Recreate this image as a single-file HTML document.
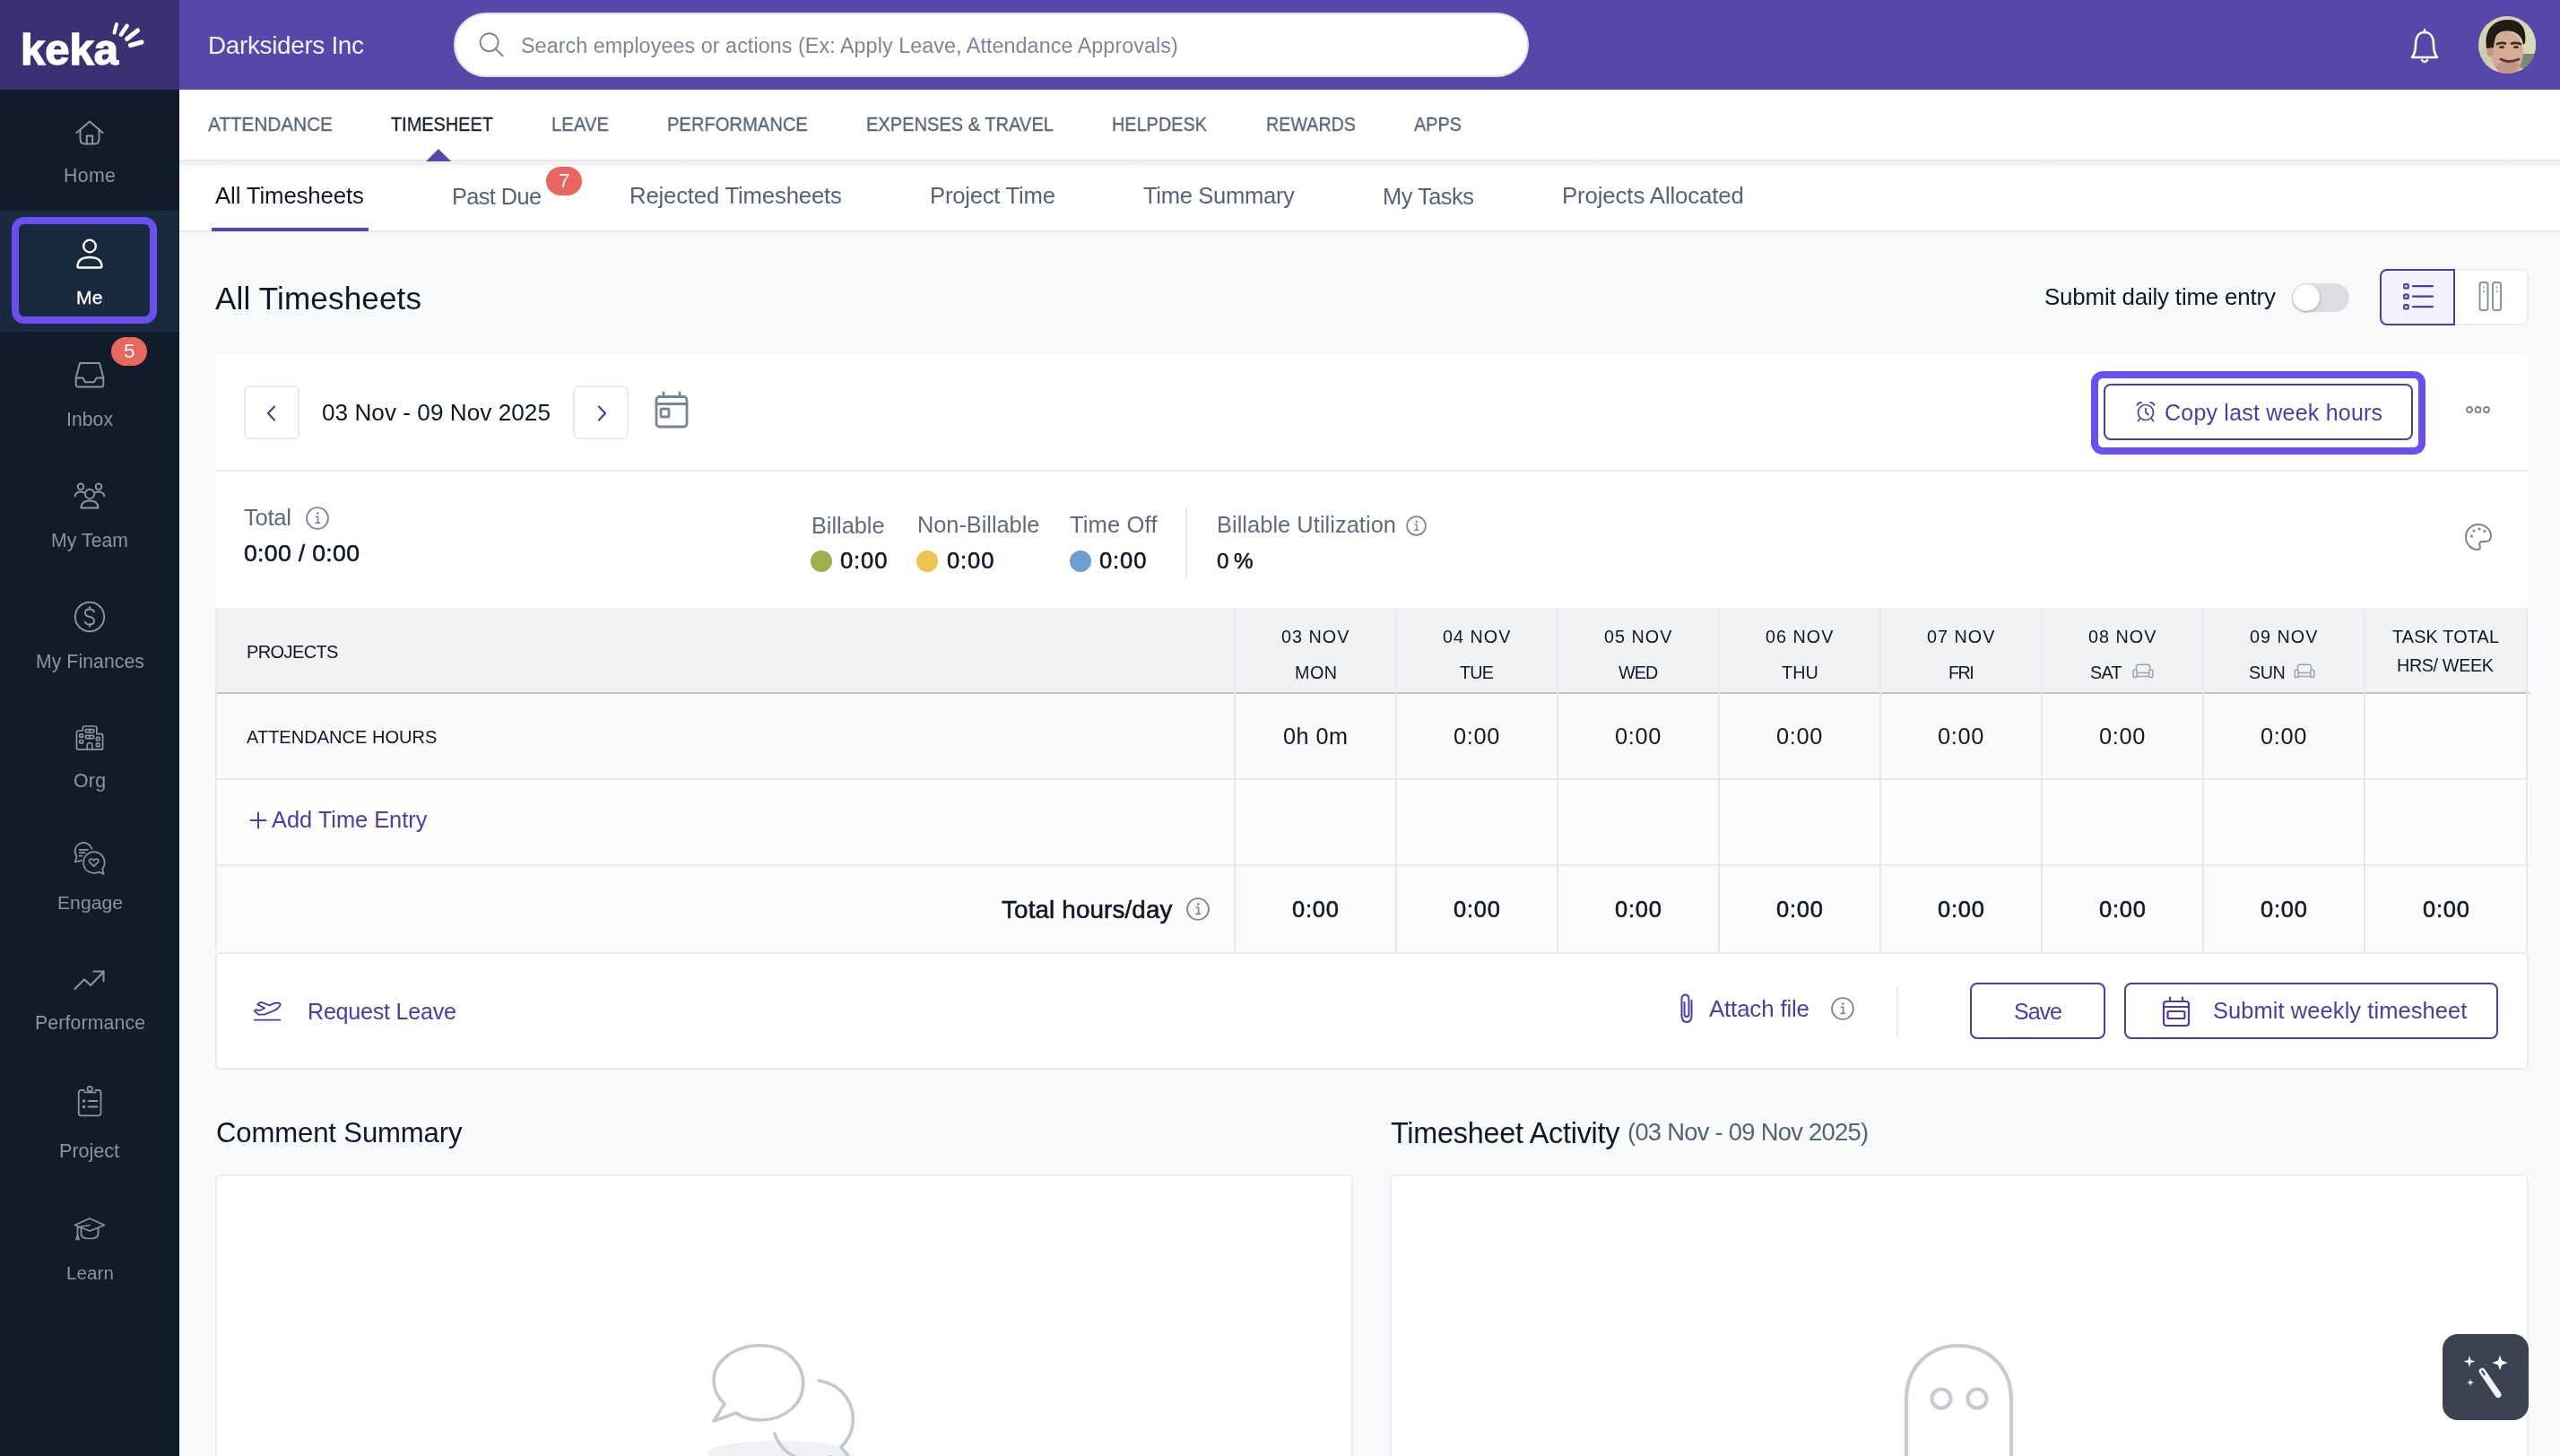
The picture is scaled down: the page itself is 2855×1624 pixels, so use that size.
<!DOCTYPE html>
<html><head><meta charset="utf-8"><style>
html,body{margin:0;padding:0;}
body{width:2855px;height:1624px;position:relative;overflow:hidden;background:#f8f9fb;font-family:"Liberation Sans",sans-serif;}
.t{position:absolute;white-space:nowrap;will-change:transform;}
svg{display:block}
</style></head><body>
<div style="position:absolute;left:0px;top:0px;width:200px;height:1624px;background:#101c29"></div>
<div style="position:absolute;left:0px;top:0px;width:200px;height:100px;background:#3c3073"></div>
<div style="position:absolute;left:200px;top:0px;width:2655px;height:100px;background:#5647a8"></div>
<div style="position:absolute;left:200px;top:100px;width:2655px;height:78px;background:#fff"></div>
<div style="position:absolute;left:200px;top:178px;width:2655px;height:79px;background:#fff"></div>
<div style="position:absolute;left:200px;top:178px;width:2655px;height:13px;background:linear-gradient(#e6e7ea 0%,#efeff1 25%,#f8f8f9 55%,#fdfdfd 80%,rgba(255,255,255,0) 100%)"></div>
<div style="position:absolute;left:200px;top:257px;width:2655px;height:2px;background:#e8eaed"></div>
<div class="t" style="left:22.5px;top:31px;font-size:49px;line-height:49px;color:#fff;font-weight:700;letter-spacing:0px;-webkit-text-stroke:1.4px #fff">keka</div>
<svg style="position:absolute;left:120px;top:20px;overflow:visible" width="45" height="40" viewBox="0 0 45 40"><g stroke="#fff" stroke-linecap="round" fill="none"><line x1="7.5" y1="16.5" x2="10" y2="7" stroke-width="4"/><line x1="15" y1="18.5" x2="21.5" y2="9" stroke-width="4.6"/><line x1="21.5" y1="23.5" x2="33.5" y2="14" stroke-width="5"/><line x1="25.5" y1="30.5" x2="38" y2="27" stroke-width="5"/></g></svg>
<div class="t" style="left:232.00px;top:36.87px;font-size:27.9px;line-height:27.9px;color:#f2f0fb;font-weight:400;letter-spacing:-0.33px;">Darksiders Inc</div>
<div style="position:absolute;left:506px;top:14px;width:1199px;height:72px;border-radius:36px;background:#fff;box-sizing:border-box;border:2px solid #dfe1e6"></div>
<svg style="position:absolute;left:533px;top:35px;overflow:visible" width="32" height="32" viewBox="0 0 32 32"><circle cx="12.6" cy="12.2" r="10" stroke="#7b8797" stroke-width="1.9" fill="none"/><line x1="19.8" y1="19.6" x2="27.5" y2="27.3" stroke="#7b8797" stroke-width="2" stroke-linecap="round"/></svg>
<div class="t" style="left:581.00px;top:40.23px;font-size:23.34px;line-height:23.34px;color:#7b8797;font-weight:400;letter-spacing:0.06px;">Search employees or actions (Ex: Apply Leave, Attendance Approvals)</div>
<svg style="position:absolute;left:2686px;top:30px;overflow:visible" width="36" height="44" viewBox="0 0 36 44"><path d="M4 34 C7 30 8 27 8 20 C8 11 12 6 18 6 C24 6 28 11 28 20 C28 27 29 30 32 34 Z" stroke="#fff" stroke-width="2.6" fill="none" stroke-linejoin="round"/><path d="M15 37 Q18 41 21 37" stroke="#fff" stroke-width="2.4" fill="none" stroke-linecap="round"/><line x1="18" y1="3" x2="18" y2="6" stroke="#fff" stroke-width="2.4" stroke-linecap="round"/></svg>
<svg style="position:absolute;left:2764px;top:18px;overflow:visible" width="64" height="64" viewBox="0 0 64 64"><defs><clipPath id="av"><circle cx="32" cy="32" r="32"/></clipPath></defs><g clip-path="url(#av)"><rect width="64" height="64" fill="#d6d2b4"/><rect x="0" y="34" width="14" height="30" fill="#c8cfac"/><rect x="47" y="42" width="17" height="22" fill="#6f8f70"/><rect x="47" y="14" width="17" height="28" fill="#d9d8b8"/><ellipse cx="32" cy="41" rx="18" ry="24" fill="#d5ab96"/><ellipse cx="13" cy="39" rx="4" ry="6.5" fill="#c59883"/><path d="M9 36 C6 16 16 4 33 4 C48 4 54 14 52 30 L50 32 C49 22 42 16 31 16.5 C21 17 18 22 17 35 Z" fill="#231a15"/><path d="M20 31.5 Q26 28.5 31 31" stroke="#3b2a22" stroke-width="2.6" fill="none"/><path d="M36 31 Q42 28.5 48 31.5" stroke="#3b2a22" stroke-width="2.6" fill="none"/><ellipse cx="26" cy="34.5" rx="3" ry="1.6" fill="#4a3129"/><ellipse cx="42" cy="34.5" rx="3" ry="1.6" fill="#4a3129"/><ellipse cx="34" cy="57" rx="14" ry="7" fill="#b48874" opacity="0.55"/><path d="M25 48 Q34 53 45 48" stroke="#5b3b31" stroke-width="3" fill="none" stroke-linecap="round"/><path d="M44 64 L46 59 L50 58 L50 64 Z" fill="#e4e2da"/></g></svg>
<div style="position:absolute;left:0px;top:235px;width:200px;height:135px;background:#192a3f"></div>
<div style="position:absolute;left:13px;top:242px;width:162px;height:119px;box-sizing:border-box;border:8px solid #6c4ff2;border-radius:14px"></div>
<svg style="position:absolute;left:84px;top:133px;overflow:visible" width="32" height="30" viewBox="0 0 32 30"><g stroke="#8a94a3" stroke-width="2" fill="none" stroke-linecap="round" stroke-linejoin="round"><path d="M1.5 15 L16 2.5 L30.5 15"/><path d="M5.5 11.5 V22 Q5.5 27.5 11 27.5 H21 Q26.5 27.5 26.5 22 V11.5"/><path d="M12.7 27.5 V18.5 H19.2 V27.5"/></g></svg>
<div class="t" style="left:71.00px;top:185.93px;font-size:21.34px;line-height:21.34px;color:#8a94a3;font-weight:400;letter-spacing:0.36px;">Home</div>
<svg style="position:absolute;left:84px;top:262px;overflow:visible" width="32" height="40" viewBox="0 0 32 40"><g stroke="#fff" stroke-width="2.3" fill="none" stroke-linecap="round" stroke-linejoin="round"><circle cx="16" cy="12.5" r="6.8"/><path d="M2.5 35.5 Q2.5 25 16 25 Q29.5 25 29.5 35.5 Q29.5 36.5 28 36.5 H4 Q2.5 36.5 2.5 35.5 Z"/></g></svg>
<div class="t" style="left:85.25px;top:320.59px;font-size:21.14px;line-height:21.14px;color:#ffffff;font-weight:400;letter-spacing:0.13px;-webkit-text-stroke:0.3px #fff;">Me</div>
<svg style="position:absolute;left:83px;top:402px;overflow:visible" width="34" height="32" viewBox="0 0 34 32"><g stroke="#8a94a3" stroke-width="1.9" fill="none" stroke-linecap="round" stroke-linejoin="round"><path d="M6 3 H28 L32.3 19.5 V27 Q32.3 29.5 29.8 29.5 H4.2 Q1.7 29.5 1.7 27 V19.5 Z"/><path d="M1.7 19.5 H9.4 L12 24.2 H22 L24.6 19.5 H32.3"/></g></svg>
<div style="position:absolute;left:124px;top:376px;width:40px;height:32px;border-radius:16px;background:#e8675f"></div>
<div class="t" style="left:137.73px;top:380.92px;font-size:22.53px;line-height:22.53px;color:#fff;font-weight:400;letter-spacing:0px;">5</div>
<div class="t" style="left:73.99px;top:457.09px;font-size:21.15px;line-height:21.15px;color:#8a94a3;font-weight:400;letter-spacing:0.07px;">Inbox</div>
<svg style="position:absolute;left:82px;top:538px;overflow:visible" width="36" height="30" viewBox="0 0 36 30"><g stroke="#8a94a3" stroke-width="1.9" fill="none" stroke-linecap="round" stroke-linejoin="round"><circle cx="18" cy="13" r="5.2"/><path d="M8.5 28.5 Q8.5 20.5 18 20.5 Q27.5 20.5 27.5 28.5 Z"/><circle cx="8" cy="4.8" r="3.3"/><circle cx="28" cy="4.8" r="3.3"/><path d="M1.5 15.5 Q2.5 10.5 8 10.5 Q10.5 10.5 12 11.5"/><path d="M34.5 15.5 Q33.5 10.5 28 10.5 Q25.5 10.5 24 11.5"/></g></svg>
<div class="t" style="left:57.01px;top:592.08px;font-size:21.16px;line-height:21.16px;color:#8a94a3;font-weight:400;letter-spacing:0.09px;">My Team</div>
<svg style="position:absolute;left:82px;top:670px;overflow:visible" width="36" height="36" viewBox="0 0 36 36"><g stroke="#8a94a3" stroke-width="1.9" fill="none" stroke-linecap="round" stroke-linejoin="round"><circle cx="18" cy="18" r="16.2"/><path d="M23 12.5 Q22 9.5 18 9.5 Q13 9.5 13 13.5 Q13 17 18 18 Q23 19 23 22.5 Q23 26.5 18 26.5 Q13.5 26.5 12.7 23.5"/><line x1="18" y1="7" x2="18" y2="9.5"/><line x1="18" y1="26.5" x2="18" y2="29"/></g></svg>
<div class="t" style="left:39.52px;top:726.56px;font-size:21.18px;line-height:21.18px;color:#8a94a3;font-weight:400;letter-spacing:0.09px;">My Finances</div>
<svg style="position:absolute;left:84px;top:809px;overflow:visible" width="32" height="28" viewBox="0 0 32 28"><g stroke="#8a94a3" stroke-width="1.7" fill="none" stroke-linecap="round" stroke-linejoin="round"><path d="M1.5 24.9 V8 Q1.5 6 3.5 6 H8.3 V3 Q8.3 1 10.3 1 H21.8 Q23.8 1 23.8 3 V9.6 H28.6 Q30.6 9.6 30.6 11.6 V24.9 Q30.6 26.9 28.6 26.9 H3.5 Q1.5 26.9 1.5 24.9 Z"/><rect x="11.4" y="4.6" width="9.3" height="3.4" rx="1"/><line x1="16" y1="4.6" x2="16" y2="8"/><rect x="11.4" y="11.3" width="9.3" height="3.4" rx="1"/><line x1="16" y1="11.3" x2="16" y2="14.7"/><rect x="4.8" y="9.8" width="3.8" height="3.4" rx="0.8"/><rect x="4.8" y="16.5" width="3.8" height="3.4" rx="0.8"/><rect x="23.4" y="13.4" width="3.8" height="3.4" rx="0.8"/><rect x="23.4" y="20.2" width="3.8" height="3.4" rx="0.8"/><path d="M13.3 26.9 V22 Q13.3 19.5 16 19.5 Q18.8 19.5 18.8 22 V26.9"/></g></svg>
<div class="t" style="left:82.00px;top:860.98px;font-size:21.28px;line-height:21.28px;color:#8a94a3;font-weight:400;letter-spacing:0.26px;">Org</div>
<svg style="position:absolute;left:82px;top:940px;overflow:visible" width="36" height="36" viewBox="0 0 36 36"><g stroke="#8a94a3" stroke-width="1.7" fill="none" stroke-linecap="round" stroke-linejoin="round"><path d="M20.3 6.8 A9.5 9.5 0 1 0 3.6 15.2 L1.8 21.5 L9 19.6"/><path d="M6.6 7.9 H15.9 M6.6 11.2 H12.8 M6.6 14.7 H9.7"/><path d="M28.5 32.4 A11.8 11.8 0 1 1 32.2 29.2 L33.8 35 Z"/><path d="M22.7 26.2 L18.3 21.8 Q16.6 19.6 18.4 18.5 Q20.6 17.3 22.7 19.6 Q24.8 17.3 27 18.5 Q28.8 19.6 27.1 21.8 Z"/></g></svg>
<div class="t" style="left:63.51px;top:996.12px;font-size:21.11px;line-height:21.11px;color:#8a94a3;font-weight:400;letter-spacing:0.04px;">Engage</div>
<svg style="position:absolute;left:82px;top:1081px;overflow:visible" width="36" height="24" viewBox="0 0 36 24"><g stroke="#8a94a3" stroke-width="2" fill="none" stroke-linecap="round" stroke-linejoin="round"><path d="M1.5 22 L12 11.5 L19 18 L33.5 3"/><path d="M22.5 2.5 H33.5 V13.5"/></g></svg>
<div class="t" style="left:38.50px;top:1131.01px;font-size:21.24px;line-height:21.24px;color:#8a94a3;font-weight:400;letter-spacing:0.14px;">Performance</div>
<svg style="position:absolute;left:86px;top:1210px;overflow:visible" width="28" height="36" viewBox="0 0 28 36"><g stroke="#8a94a3" stroke-width="1.8" fill="none" stroke-linecap="round" stroke-linejoin="round"><path d="M8 6 H4.5 Q1.7 6 1.7 9 V31 Q1.7 34.4 5 34.4 H23 Q26.5 34.4 26.5 31 V9 Q26.5 6 24 6 H20.5"/><path d="M8 8.3 H20.5"/><circle cx="14.2" cy="4.6" r="2.7"/><path d="M12.8 18 H22.5 M12.8 24.5 H22.5"/><circle cx="7.6" cy="18" r="0.8" fill="#8a94a3"/><circle cx="7.6" cy="24.5" r="0.8" fill="#8a94a3"/></g></svg>
<div class="t" style="left:66.49px;top:1273.13px;font-size:21.69px;line-height:21.69px;color:#8a94a3;font-weight:400;letter-spacing:-0.08px;">Project</div>
<svg style="position:absolute;left:82px;top:1357px;overflow:visible" width="36" height="28" viewBox="0 0 36 28"><g stroke="#8a94a3" stroke-width="1.7" fill="none" stroke-linecap="round" stroke-linejoin="round"><path d="M1.5 9.5 L18 2 L34.5 9.5 L18 16 Z"/><path d="M8.5 13 V19.5 Q8.5 24.5 18 24.5 Q27.5 24.5 27.5 19.5 V13"/><path d="M18 9.5 L4.5 12 V23"/><path d="M3 25.5 L4.5 20.5 L6 25.5 Z"/></g></svg>
<div class="t" style="left:73.50px;top:1409.64px;font-size:20.5px;line-height:20.5px;color:#8a94a3;font-weight:400;letter-spacing:0.14px;">Learn</div>
<div class="t" style="left:232.00px;top:127.00px;font-size:22.67px;line-height:22.67px;color:#566378;transform:scaleX(0.9145);transform-origin:left top;-webkit-text-stroke:0.3px #566378">ATTENDANCE</div>
<div class="t" style="left:436.00px;top:127.00px;font-size:22.67px;line-height:22.67px;color:#161c2b;transform:scaleX(0.8787);transform-origin:left top;-webkit-text-stroke:0.3px #161c2b">TIMESHEET</div>
<div class="t" style="left:615.00px;top:127.00px;font-size:22.67px;line-height:22.67px;color:#566378;transform:scaleX(0.8962);transform-origin:left top;-webkit-text-stroke:0.3px #566378">LEAVE</div>
<div class="t" style="left:744.00px;top:127.00px;font-size:22.67px;line-height:22.67px;color:#566378;transform:scaleX(0.8903);transform-origin:left top;-webkit-text-stroke:0.3px #566378">PERFORMANCE</div>
<div class="t" style="left:966.00px;top:127.00px;font-size:22.67px;line-height:22.67px;color:#566378;transform:scaleX(0.8854);transform-origin:left top;-webkit-text-stroke:0.3px #566378">EXPENSES &amp; TRAVEL</div>
<div class="t" style="left:1240.00px;top:127.00px;font-size:22.67px;line-height:22.67px;color:#566378;transform:scaleX(0.8763);transform-origin:left top;-webkit-text-stroke:0.3px #566378">HELPDESK</div>
<div class="t" style="left:1412.00px;top:127.00px;font-size:22.67px;line-height:22.67px;color:#566378;transform:scaleX(0.8693);transform-origin:left top;-webkit-text-stroke:0.3px #566378">REWARDS</div>
<div class="t" style="left:1577.00px;top:127.00px;font-size:22.67px;line-height:22.67px;color:#566378;transform:scaleX(0.8762);transform-origin:left top;-webkit-text-stroke:0.3px #566378">APPS</div>
<svg style="position:absolute;left:475px;top:166px;overflow:visible" width="28" height="14" viewBox="0 0 28 14"><path d="M0 14 L14 0 L28 14 Z" fill="#5647a8"/></svg>
<div class="t" style="left:240.00px;top:206.33px;font-size:25.82px;line-height:25.82px;color:#101828;font-weight:400;letter-spacing:-0.15px;">All Timesheets</div>
<div class="t" style="left:504.40px;top:206.75px;font-size:25.33px;line-height:25.33px;color:#566378;font-weight:400;letter-spacing:-0.6px;">Past Due</div>
<div class="t" style="left:702.00px;top:206.38px;font-size:25.76px;line-height:25.76px;color:#566378;font-weight:400;letter-spacing:-0.2px;">Rejected Timesheets</div>
<div class="t" style="left:1037.00px;top:206.44px;font-size:25.69px;line-height:25.69px;color:#566378;font-weight:400;letter-spacing:-0.25px;">Project Time</div>
<div class="t" style="left:1275.25px;top:206.48px;font-size:25.64px;line-height:25.64px;color:#566378;font-weight:400;letter-spacing:-0.35px;">Time Summary</div>
<div class="t" style="left:1542.00px;top:206.65px;font-size:25.44px;line-height:25.44px;color:#566378;font-weight:400;letter-spacing:-0.51px;">My Tasks</div>
<div class="t" style="left:1741.50px;top:206.32px;font-size:25.83px;line-height:25.83px;color:#566378;font-weight:400;letter-spacing:-0.14px;">Projects Allocated</div>
<div style="position:absolute;left:236px;top:254px;width:175px;height:4px;background:#5647a8;border-radius:1px"></div>
<div style="position:absolute;left:609px;top:186px;width:40px;height:32px;border-radius:16px;background:#e8665f"></div>
<div class="t" style="left:622.73px;top:190.92px;font-size:22.53px;line-height:22.53px;color:#fff;font-weight:400;letter-spacing:0px;">7</div>
<div class="t" style="left:240.00px;top:315.29px;font-size:35.08px;line-height:35.08px;color:#0f1828;font-weight:400;letter-spacing:0.15px;">All Timesheets</div>
<div class="t" style="left:2279.50px;top:319.06px;font-size:25.9px;line-height:25.9px;color:#0f1828;font-weight:400;letter-spacing:-0.18px;">Submit daily time entry</div>
<div style="position:absolute;left:2556px;top:316px;width:64px;height:32px;border-radius:16px;background:#dcdde1"></div>
<div style="position:absolute;left:2557px;top:317px;width:30px;height:30px;border-radius:15px;background:#fff;box-shadow:0 1px 3px rgba(0,0,0,0.3)"></div>
<div style="position:absolute;left:2654px;top:300px;width:166px;height:63px;box-sizing:border-box;border:2px solid #eceef1;border-radius:8px;background:#fff"></div>
<div style="position:absolute;left:2654px;top:300px;width:84px;height:63px;box-sizing:border-box;border:2.5px solid #4b3ea5;border-radius:8px 0 0 8px;background:#f3f1fd"></div>
<svg style="position:absolute;left:2678px;top:313px;overflow:visible" width="36" height="36" viewBox="0 0 36 36"><g stroke="#4b3ea5" stroke-width="2.2" fill="none" stroke-linecap="round"><rect x="3.2" y="4" width="4.5" height="4.5" rx="0.8"/><rect x="3.2" y="15.5" width="4.5" height="4.5" rx="0.8"/><rect x="3.2" y="27" width="4.5" height="4.5" rx="0.8"/><line x1="13" y1="6.2" x2="35" y2="6.2"/><line x1="13" y1="17.7" x2="35" y2="17.7"/><line x1="13" y1="29.2" x2="35" y2="29.2"/></g></svg>
<svg style="position:absolute;left:2764px;top:313px;overflow:visible" width="30" height="36" viewBox="0 0 30 36"><g stroke="#8a94a3" stroke-width="2" fill="none"><rect x="1.5" y="2" width="9" height="31" rx="2.5"/><rect x="16" y="2" width="9" height="31" rx="2.5"/></g><g fill="#8a94a3"><circle cx="6" cy="7.5" r="1"/><circle cx="6" cy="12" r="1"/><circle cx="20.5" cy="7.5" r="1"/><circle cx="20.5" cy="12" r="1"/></g></svg>
<div style="position:absolute;left:240px;top:396px;width:2580px;height:282px;background:#fff"></div>
<div style="position:absolute;left:240px;top:524px;width:2580px;height:2px;background:#e8eaed"></div>
<div style="position:absolute;left:272px;top:430px;width:62px;height:60px;box-sizing:border-box;border:2px solid #e8eaed;border-radius:6px;background:#fff"></div>
<div style="position:absolute;left:639px;top:430px;width:62px;height:60px;box-sizing:border-box;border:2px solid #e8eaed;border-radius:6px;background:#fff"></div>
<svg style="position:absolute;left:296px;top:451px;overflow:visible" width="14" height="20" viewBox="0 0 14 20"><path d="M10 2.5 L3 10 L10 17.5" stroke="#4b3ea5" stroke-width="2.2" fill="none" stroke-linecap="round" stroke-linejoin="round"/></svg>
<svg style="position:absolute;left:664px;top:451px;overflow:visible" width="14" height="20" viewBox="0 0 14 20"><path d="M4 2.5 L11 10 L4 17.5" stroke="#4b3ea5" stroke-width="2.2" fill="none" stroke-linecap="round" stroke-linejoin="round"/></svg>
<div class="t" style="left:359.00px;top:446.83px;font-size:26.18px;line-height:26.18px;color:#0f1828;font-weight:400;letter-spacing:0.02px;">03 Nov - 09 Nov 2025</div>
<svg style="position:absolute;left:730px;top:436px;overflow:visible" width="38" height="42" viewBox="0 0 38 42"><g stroke="#7b8593" stroke-width="2.8" fill="none" stroke-linecap="round"><rect x="2" y="6.5" width="34" height="33.5" rx="3.5"/><line x1="2" y1="14.5" x2="36" y2="14.5"/><line x1="10" y1="2" x2="10" y2="6.5"/><line x1="28" y1="2" x2="28" y2="6.5"/><rect x="7" y="20" width="9" height="9" rx="1.5"/></g></svg>
<div style="position:absolute;left:2332px;top:414px;width:373px;height:93px;box-sizing:border-box;border:8px solid #6c4ff2;border-radius:13px"></div>
<div style="position:absolute;left:2346px;top:428px;width:345px;height:63px;box-sizing:border-box;border:2px solid #4b3ea5;border-radius:8px;background:#fff"></div>
<svg style="position:absolute;left:2381px;top:447px;overflow:visible" width="24" height="24" viewBox="0 0 24 24"><g stroke="#4b3ea5" stroke-width="1.7" fill="none" stroke-linecap="round"><circle cx="12" cy="13" r="8.5"/><path d="M12 8.5 V13 L15 15.5"/><path d="M2.5 5 Q3.5 1.5 7 1.8"/><path d="M21.5 5 Q20.5 1.5 17 1.8"/><line x1="5.5" y1="20" x2="3.5" y2="22.5"/><line x1="18.5" y1="20" x2="20.5" y2="22.5"/></g></svg>
<div class="t" style="left:2414.00px;top:447.83px;font-size:24.99px;line-height:24.99px;color:#4b3ea5;font-weight:400;letter-spacing:0.22px;">Copy last week hours</div>
<svg style="position:absolute;left:2750px;top:451px;overflow:visible" width="28" height="12" viewBox="0 0 28 12"><g stroke="#7b8593" stroke-width="1.9" fill="none"><circle cx="4" cy="6" r="3"/><circle cx="13.5" cy="6" r="3"/><circle cx="23" cy="6" r="3"/></g></svg>
<div class="t" style="left:272.00px;top:565.21px;font-size:25.73px;line-height:25.73px;color:#606c7d;font-weight:400;letter-spacing:-0.34px;">Total</div>
<svg style="position:absolute;left:341px;top:565px;overflow:visible" width="26" height="26" viewBox="0 0 26 26"><circle cx="13.0" cy="13.0" r="11.9" stroke="#7b8797" stroke-width="1.90" fill="none"/><circle cx="13.30" cy="7.60" r="1.35" fill="#7b8797"/><path d="M10.70 11.20 H13.60 V18.40 M10.40 18.40 H16.20" stroke="#7b8797" stroke-width="1.60" fill="none"/></svg>
<div class="t" style="left:272.00px;top:604.45px;font-size:26.62px;line-height:26.62px;color:#0f1828;font-weight:400;letter-spacing:0.32px;-webkit-text-stroke:0.55px #0f1828;">0:00 / 0:00</div>
<div class="t" style="left:904.50px;top:573.51px;font-size:25.37px;line-height:25.37px;color:#606c7d;font-weight:400;letter-spacing:-0.04px;">Billable</div>
<div class="t" style="left:1023.00px;top:573.49px;font-size:25.39px;line-height:25.39px;color:#606c7d;font-weight:400;letter-spacing:-0.04px;">Non-Billable</div>
<div class="t" style="left:1193.00px;top:573.33px;font-size:25.58px;line-height:25.58px;color:#606c7d;font-weight:400;letter-spacing:0.12px;">Time Off</div>
<div class="t" style="left:1357.00px;top:573.43px;font-size:25.47px;line-height:25.47px;color:#606c7d;font-weight:400;letter-spacing:0.02px;">Billable Utilization</div>
<svg style="position:absolute;left:1568px;top:575px;overflow:visible" width="23" height="23" viewBox="0 0 23 23"><circle cx="11.5" cy="11.5" r="10.4" stroke="#7b8797" stroke-width="1.68" fill="none"/><circle cx="11.77" cy="6.72" r="1.19" fill="#7b8797"/><path d="M9.47 9.91 H12.03 V16.28 M9.20 16.28 H14.33" stroke="#7b8797" stroke-width="1.42" fill="none"/></svg>
<div style="position:absolute;left:904px;top:614px;width:24px;height:24px;border-radius:12px;background:#9db04b"></div>
<div style="position:absolute;left:1022px;top:614px;width:24px;height:24px;border-radius:12px;background:#f0c24e"></div>
<div style="position:absolute;left:1193px;top:614px;width:24px;height:24px;border-radius:12px;background:#6c9fd4"></div>
<div class="t" style="left:937.00px;top:613.30px;font-size:25.62px;line-height:25.62px;color:#0f1828;font-weight:400;letter-spacing:0.88px;-webkit-text-stroke:0.55px #0f1828;">0:00</div>
<div class="t" style="left:1055.50px;top:613.30px;font-size:25.62px;line-height:25.62px;color:#0f1828;font-weight:400;letter-spacing:0.88px;-webkit-text-stroke:0.55px #0f1828;">0:00</div>
<div class="t" style="left:1226.00px;top:613.30px;font-size:25.62px;line-height:25.62px;color:#0f1828;font-weight:400;letter-spacing:0.88px;-webkit-text-stroke:0.55px #0f1828;">0:00</div>
<div style="position:absolute;left:1322px;top:566px;width:2px;height:80px;background:#e8eaed"></div>
<div class="t" style="left:1357.00px;top:614.48px;font-size:24.23px;line-height:24.23px;color:#0f1828;font-weight:400;letter-spacing:-0.63px;-webkit-text-stroke:0.55px #0f1828;">0 %</div>
<svg style="position:absolute;left:2748px;top:583px;overflow:visible" width="32" height="32" viewBox="0 0 32 32"><g stroke="#7b8593" stroke-width="2" fill="none" stroke-linecap="round"><path d="M16 2 C8 2 2 8 2 16 C2 24 8 30 15 30 C18 30 18.5 27.5 17.5 25.5 C16.5 23.5 17.5 21 20.5 21 H24 C28 21 30 18.5 30 15 C30 7.5 23.5 2 16 2 Z"/></g><g fill="#7b8593"><circle cx="8.5" cy="15" r="1.5"/><circle cx="11" cy="9" r="1.5"/><circle cx="17" cy="7" r="1.5"/><circle cx="23" cy="9.5" r="1.5"/></g></svg>
<div style="position:absolute;left:240px;top:678px;width:2580px;height:95px;background:#f1f2f4"></div>
<div style="position:absolute;left:240px;top:772px;width:2580px;height:2px;background:#bec4cc"></div>
<div style="position:absolute;left:240px;top:774px;width:2580px;height:94px;background:#fafafa"></div>
<div style="position:absolute;left:2637px;top:774px;width:181px;height:94px;background:#fdfdfd"></div>
<div style="position:absolute;left:240px;top:868px;width:2580px;height:2px;background:#e8eaed"></div>
<div style="position:absolute;left:240px;top:870px;width:2580px;height:94px;background:#fdfdfd"></div>
<div style="position:absolute;left:240px;top:964px;width:2580px;height:2px;background:#e8eaed"></div>
<div style="position:absolute;left:240px;top:966px;width:2580px;height:96px;background:#fbfbfb"></div>
<div style="position:absolute;left:240px;top:678px;width:2px;height:382px;background:#e8eaed"></div>
<div style="position:absolute;left:1376px;top:678px;width:2px;height:384px;background:#e6e8eb"></div>
<div style="position:absolute;left:1556px;top:678px;width:2px;height:384px;background:#e6e8eb"></div>
<div style="position:absolute;left:1736px;top:678px;width:2px;height:384px;background:#e6e8eb"></div>
<div style="position:absolute;left:1916px;top:678px;width:2px;height:384px;background:#e6e8eb"></div>
<div style="position:absolute;left:2096px;top:678px;width:2px;height:384px;background:#e6e8eb"></div>
<div style="position:absolute;left:2276px;top:678px;width:2px;height:384px;background:#e6e8eb"></div>
<div style="position:absolute;left:2456px;top:678px;width:2px;height:384px;background:#e6e8eb"></div>
<div style="position:absolute;left:2636px;top:678px;width:2px;height:384px;background:#e6e8eb"></div>
<div style="position:absolute;left:2817px;top:678px;width:2px;height:384px;background:#e6e8eb"></div>
<div class="t" style="left:274.50px;top:716.51px;font-size:20.06px;line-height:20.06px;color:#0f1828;font-weight:400;letter-spacing:-0.64px;">PROJECTS</div>
<div class="t" style="left:1429.26px;top:701.05px;font-size:19.77px;line-height:19.77px;color:#0f1828;font-weight:400;letter-spacing:1.03px;">03 NOV</div>
<div class="t" style="left:1443.50px;top:741.05px;font-size:19.77px;line-height:19.77px;color:#0f1828;font-weight:400;letter-spacing:0.44px;">MON</div>
<div class="t" style="left:1430.99px;top:809.16px;font-size:25.19px;line-height:25.19px;color:#0f1828;font-weight:400;letter-spacing:0.5px;">0h 0m</div>
<div class="t" style="left:1441.00px;top:1001.89px;font-size:25.51px;line-height:25.51px;color:#0f1828;font-weight:400;letter-spacing:0.78px;-webkit-text-stroke:0.55px #0f1828;">0:00</div>
<div class="t" style="left:1609.26px;top:701.05px;font-size:19.77px;line-height:19.77px;color:#0f1828;font-weight:400;letter-spacing:1.03px;">04 NOV</div>
<div class="t" style="left:1628.00px;top:741.05px;font-size:19.77px;line-height:19.77px;color:#0f1828;font-weight:400;letter-spacing:-0.77px;">TUE</div>
<div class="t" style="left:1621.25px;top:808.98px;font-size:25.41px;line-height:25.41px;color:#0f1828;font-weight:400;letter-spacing:0.68px;">0:00</div>
<div class="t" style="left:1621.00px;top:1001.89px;font-size:25.51px;line-height:25.51px;color:#0f1828;font-weight:400;letter-spacing:0.78px;-webkit-text-stroke:0.55px #0f1828;">0:00</div>
<div class="t" style="left:1789.26px;top:701.05px;font-size:19.77px;line-height:19.77px;color:#0f1828;font-weight:400;letter-spacing:1.03px;">05 NOV</div>
<div class="t" style="left:1804.90px;top:741.05px;font-size:19.77px;line-height:19.77px;color:#0f1828;font-weight:400;letter-spacing:-0.96px;">WED</div>
<div class="t" style="left:1801.25px;top:808.98px;font-size:25.41px;line-height:25.41px;color:#0f1828;font-weight:400;letter-spacing:0.68px;">0:00</div>
<div class="t" style="left:1801.00px;top:1001.89px;font-size:25.51px;line-height:25.51px;color:#0f1828;font-weight:400;letter-spacing:0.78px;-webkit-text-stroke:0.55px #0f1828;">0:00</div>
<div class="t" style="left:1969.26px;top:701.05px;font-size:19.77px;line-height:19.77px;color:#0f1828;font-weight:400;letter-spacing:1.03px;">06 NOV</div>
<div class="t" style="left:1986.60px;top:741.05px;font-size:19.77px;line-height:19.77px;color:#0f1828;font-weight:400;letter-spacing:0.08px;">THU</div>
<div class="t" style="left:1981.25px;top:808.98px;font-size:25.41px;line-height:25.41px;color:#0f1828;font-weight:400;letter-spacing:0.68px;">0:00</div>
<div class="t" style="left:1981.00px;top:1001.89px;font-size:25.51px;line-height:25.51px;color:#0f1828;font-weight:400;letter-spacing:0.78px;-webkit-text-stroke:0.55px #0f1828;">0:00</div>
<div class="t" style="left:2149.26px;top:701.05px;font-size:19.77px;line-height:19.77px;color:#0f1828;font-weight:400;letter-spacing:1.03px;">07 NOV</div>
<div class="t" style="left:2172.65px;top:741.05px;font-size:19.77px;line-height:19.77px;color:#0f1828;font-weight:400;letter-spacing:-1.57px;">FRI</div>
<div class="t" style="left:2161.25px;top:808.98px;font-size:25.41px;line-height:25.41px;color:#0f1828;font-weight:400;letter-spacing:0.68px;">0:00</div>
<div class="t" style="left:2161.00px;top:1001.89px;font-size:25.51px;line-height:25.51px;color:#0f1828;font-weight:400;letter-spacing:0.78px;-webkit-text-stroke:0.55px #0f1828;">0:00</div>
<div class="t" style="left:2329.26px;top:701.05px;font-size:19.77px;line-height:19.77px;color:#0f1828;font-weight:400;letter-spacing:1.03px;">08 NOV</div>
<div class="t" style="left:2330.55px;top:741.05px;font-size:19.77px;line-height:19.77px;color:#0f1828;font-weight:400;letter-spacing:-0.74px;">SAT</div>
<svg style="position:absolute;left:2378px;top:740px;overflow:visible" width="24" height="17" viewBox="0 0 24 17"><g stroke="#9aa3b0" stroke-width="1.5" fill="none"><path d="M4.5 8 V3.8 Q4.5 1.2 7.5 1.2 H16.5 Q19.5 1.2 19.5 3.8 V8"/><rect x="1.2" y="7" width="4" height="8.5" rx="1.8"/><rect x="18.8" y="7" width="4" height="8.5" rx="1.8"/><line x1="5.2" y1="10.5" x2="18.8" y2="10.5"/><line x1="5.2" y1="14.5" x2="18.8" y2="14.5"/></g></svg>
<div class="t" style="left:2341.25px;top:808.98px;font-size:25.41px;line-height:25.41px;color:#0f1828;font-weight:400;letter-spacing:0.68px;">0:00</div>
<div class="t" style="left:2341.00px;top:1001.89px;font-size:25.51px;line-height:25.51px;color:#0f1828;font-weight:400;letter-spacing:0.78px;-webkit-text-stroke:0.55px #0f1828;">0:00</div>
<div class="t" style="left:2509.26px;top:701.05px;font-size:19.77px;line-height:19.77px;color:#0f1828;font-weight:400;letter-spacing:1.03px;">09 NOV</div>
<div class="t" style="left:2507.93px;top:741.05px;font-size:19.77px;line-height:19.77px;color:#0f1828;font-weight:400;letter-spacing:-0.5px;">SUN</div>
<svg style="position:absolute;left:2558px;top:740px;overflow:visible" width="24" height="17" viewBox="0 0 24 17"><g stroke="#9aa3b0" stroke-width="1.5" fill="none"><path d="M4.5 8 V3.8 Q4.5 1.2 7.5 1.2 H16.5 Q19.5 1.2 19.5 3.8 V8"/><rect x="1.2" y="7" width="4" height="8.5" rx="1.8"/><rect x="18.8" y="7" width="4" height="8.5" rx="1.8"/><line x1="5.2" y1="10.5" x2="18.8" y2="10.5"/><line x1="5.2" y1="14.5" x2="18.8" y2="14.5"/></g></svg>
<div class="t" style="left:2521.25px;top:808.98px;font-size:25.41px;line-height:25.41px;color:#0f1828;font-weight:400;letter-spacing:0.68px;">0:00</div>
<div class="t" style="left:2521.00px;top:1001.89px;font-size:25.51px;line-height:25.51px;color:#0f1828;font-weight:400;letter-spacing:0.78px;-webkit-text-stroke:0.55px #0f1828;">0:00</div>
<div class="t" style="left:2668.00px;top:701.05px;font-size:19.77px;line-height:19.77px;color:#0f1828;font-weight:400;letter-spacing:0.2px;">TASK TOTAL</div>
<div class="t" style="left:2673.01px;top:732.75px;font-size:19.77px;line-height:19.77px;color:#0f1828;font-weight:400;letter-spacing:-0.37px;">HRS/ WEEK</div>
<div class="t" style="left:2701.50px;top:1001.89px;font-size:25.51px;line-height:25.51px;color:#0f1828;font-weight:400;letter-spacing:0.78px;-webkit-text-stroke:0.55px #0f1828;">0:00</div>
<div class="t" style="left:274.50px;top:812.01px;font-size:20.06px;line-height:20.06px;color:#0f1828;font-weight:400;letter-spacing:-0.0px;">ATTENDANCE HOURS</div>
<svg style="position:absolute;left:278px;top:905px;overflow:visible" width="20" height="20" viewBox="0 0 20 20"><g stroke="#4b3ea5" stroke-width="2" stroke-linecap="round"><line x1="10" y1="1.5" x2="10" y2="18.5"/><line x1="1.5" y1="10" x2="18.5" y2="10"/></g></svg>
<div class="t" style="left:302.50px;top:902.48px;font-size:25.41px;line-height:25.41px;color:#4b3ea5;font-weight:400;letter-spacing:-0.02px;">Add Time Entry</div>
<div class="t" style="left:1117.00px;top:1000.94px;font-size:27.81px;line-height:27.81px;color:#0f1828;font-weight:400;letter-spacing:0.14px;-webkit-text-stroke:0.55px #0f1828;">Total hours/day</div>
<svg style="position:absolute;left:1323px;top:1001px;overflow:visible" width="26" height="26" viewBox="0 0 26 26"><circle cx="13.0" cy="13.0" r="11.9" stroke="#7b8797" stroke-width="1.90" fill="none"/><circle cx="13.30" cy="7.60" r="1.35" fill="#7b8797"/><path d="M10.70 11.20 H13.60 V18.40 M10.40 18.40 H16.20" stroke="#7b8797" stroke-width="1.60" fill="none"/></svg>
<div style="position:absolute;left:240px;top:1062px;width:2580px;height:131px;box-sizing:border-box;border:2px solid #e9ebee;border-radius:6px;background:#fff"></div>
<svg style="position:absolute;left:282px;top:1116px;overflow:visible" width="33" height="25" viewBox="0 0 33 25"><g stroke="#4b3ea5" stroke-width="1.9" fill="none" stroke-linecap="round" stroke-linejoin="round"><path d="M5.3 4.3 Q7 2.2 9.3 1.9 L12.1 2.8 L18.6 5.4 L24.2 2.8 H29.4 Q31.2 3.6 30.3 5.4 Q28 9.2 24 11.2 L12.7 15.6 H6.2 L1.8 11.6 L3.8 9.9 Q5.5 11.3 7.8 11 L13.3 8.5 Z"/><line x1="1.8" y1="21.6" x2="30.3" y2="21.6"/></g></svg>
<div class="t" style="left:343.00px;top:1116.21px;font-size:25.13px;line-height:25.13px;color:#4b3ea5;font-weight:400;letter-spacing:-0.25px;">Request Leave</div>
<svg style="position:absolute;left:1871px;top:1107px;overflow:visible" width="22" height="36" viewBox="0 0 22 36"><path d="M15.5 9 V25.5 Q15.5 33 10 33 Q4.5 33 4.5 25.5 V7.5 Q4.5 2.5 8.5 2.5 Q12.5 2.5 12.5 7.5 V24 Q12.5 27 10 27 Q7.5 27 7.5 24 V11" stroke="#4b3ea5" stroke-width="2" fill="none" stroke-linecap="round"/></svg>
<div class="t" style="left:1906.00px;top:1112.56px;font-size:25.9px;line-height:25.9px;color:#4b3ea5;font-weight:400;letter-spacing:-0.17px;">Attach file</div>
<svg style="position:absolute;left:2042px;top:1112px;overflow:visible" width="26" height="26" viewBox="0 0 26 26"><circle cx="13.0" cy="13.0" r="11.9" stroke="#7b8797" stroke-width="1.90" fill="none"/><circle cx="13.30" cy="7.60" r="1.35" fill="#7b8797"/><path d="M10.70 11.20 H13.60 V18.40 M10.40 18.40 H16.20" stroke="#7b8797" stroke-width="1.60" fill="none"/></svg>
<div style="position:absolute;left:2115px;top:1101px;width:2px;height:55px;background:#e8eaed"></div>
<div style="position:absolute;left:2197px;top:1096px;width:151px;height:63px;box-sizing:border-box;border:2.5px solid #4b3ea5;border-radius:8px;background:#fff"></div>
<div class="t" style="left:2245.50px;top:1115.68px;font-size:25.17px;line-height:25.17px;color:#4b3ea5;font-weight:400;letter-spacing:-1.12px;">Save</div>
<div style="position:absolute;left:2369px;top:1096px;width:417px;height:63px;box-sizing:border-box;border:2.5px solid #4b3ea5;border-radius:8px;background:#fff"></div>
<svg style="position:absolute;left:2411px;top:1111px;overflow:visible" width="32" height="35" viewBox="0 0 32 35"><g stroke="#4b3ea5" stroke-width="2.2" fill="none" stroke-linecap="round"><rect x="2" y="6" width="28" height="27" rx="3"/><line x1="2" y1="12" x2="30" y2="12"/><line x1="9" y1="1.5" x2="9" y2="6"/><line x1="23" y1="1.5" x2="23" y2="6"/><rect x="6.5" y="17" width="19" height="8" rx="1.5"/></g></svg>
<div class="t" style="left:2467.50px;top:1115.39px;font-size:25.51px;line-height:25.51px;color:#4b3ea5;font-weight:400;letter-spacing:0.06px;">Submit weekly timesheet</div>
<div class="t" style="left:241.00px;top:1248.16px;font-size:31.1px;line-height:31.1px;color:#0f1828;font-weight:400;letter-spacing:-0.14px;">Comment Summary</div>
<div class="t" style="left:1551.00px;top:1247.59px;font-size:32.36px;line-height:32.36px;color:#0f1828;font-weight:400;letter-spacing:-0.24px;">Timesheet Activity</div>
<div class="t" style="left:1815.00px;top:1248.83px;font-size:27.36px;line-height:27.36px;color:#566378;font-weight:400;letter-spacing:-0.73px;">(03 Nov - 09 Nov 2025)</div>
<div style="position:absolute;left:240px;top:1310px;width:1269px;height:400px;box-sizing:border-box;border:2px solid #eceef1;border-radius:6px;background:#fff"></div>
<div style="position:absolute;left:1550px;top:1310px;width:1270px;height:400px;box-sizing:border-box;border:2px solid #eceef1;border-radius:6px;background:#fff"></div>
<svg style="position:absolute;left:780px;top:1490px;overflow:visible" width="200" height="140" viewBox="0 0 200 140"><ellipse cx="89" cy="131" rx="80" ry="14" fill="#f0f1f4"/><g stroke="#c3c8d1" stroke-width="3.6" fill="none" stroke-linejoin="round" stroke-linecap="round"><path d="M28 76 C12 61 12 38 28 25 C46 7 86 5 104 25 C120 41 120 67 102 82 C86 96 58 98 41 86 L16 95 Z"/><path d="M133 50 C160 54 176 78 170 104 C168 112 164 118 158 124 L172 142 L146 135 C130 142 110 140 96 128 C90 122 86 116 84 109"/></g></svg>
<svg style="position:absolute;left:2123px;top:1498px;overflow:visible" width="124" height="130" viewBox="0 0 124 130"><g stroke="#c5cad3" stroke-width="4.2" fill="none"><path d="M3 140 V62 C3 28 27 3 61 3 C95 3 120 28 120 62 V140"/><circle cx="42" cy="62" r="10.5"/><circle cx="82" cy="62" r="10.5"/></g></svg>
<div style="position:absolute;left:2724px;top:1488px;width:96px;height:96px;border-radius:17px;background:#3b4252"></div>
<svg style="position:absolute;left:2724px;top:1488px;overflow:visible" width="96" height="96" viewBox="0 0 96 96"><g fill="#fff"><path d="M30 24 L31.5 29 L36.5 30.5 L31.5 32 L30 37 L28.5 32 L23.5 30.5 L28.5 29 Z"/><path d="M64 23.5 L66 29.5 L72.5 32 L66 34.5 L64 40.5 L62 34.5 L55.5 32 L62 29.5 Z"/><path d="M31 50 L31.9 53.1 L35 54 L31.9 54.9 L31 58 L30.1 54.9 L27 54 L30.1 53.1 Z"/></g><line x1="44.3" y1="41.5" x2="62" y2="67.5" stroke="#f5f6f8" stroke-width="7" stroke-linecap="round"/><line x1="44.3" y1="41.5" x2="46.6" y2="45" stroke="#3b4252" stroke-width="2.2" stroke-linecap="round"/></svg>
</body></html>
